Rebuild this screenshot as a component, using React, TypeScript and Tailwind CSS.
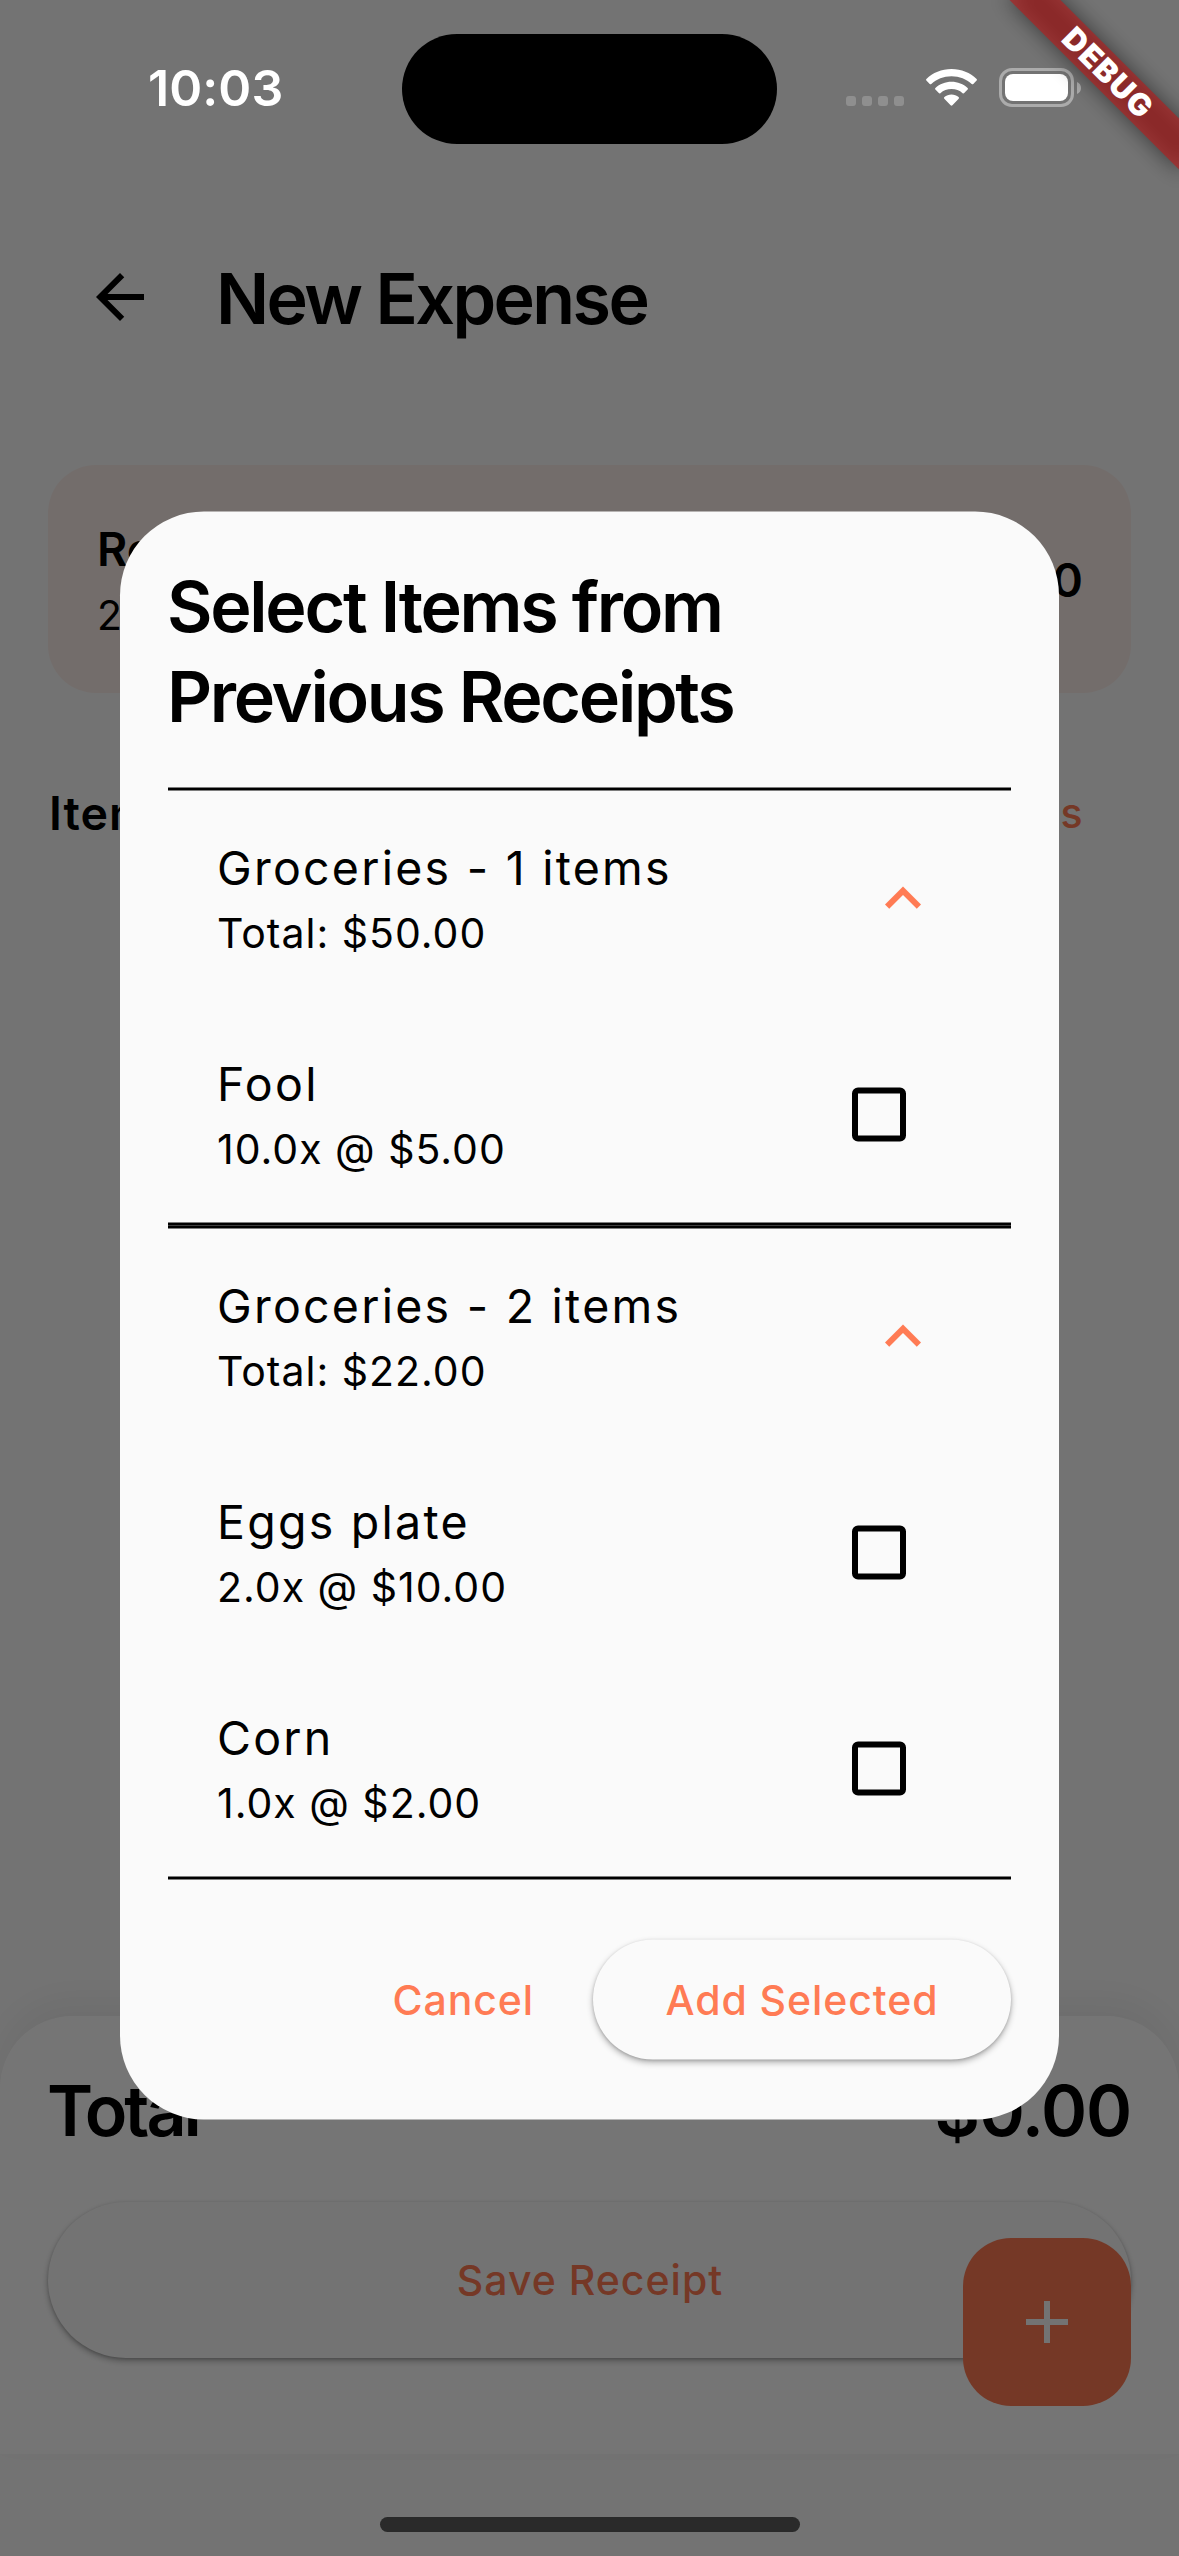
import React from "react";

type Line = { name: string; detail: string };
type Group = { title: string; total: string; items: Line[] };

const groups: Group[] = [
  {
    title: "Groceries - 1 items",
    total: "Total: $50.00",
    items: [{ name: "Fool", detail: "10.0x @ $5.00" }],
  },
  {
    title: "Groceries - 2 items",
    total: "Total: $22.00",
    items: [
      { name: "Eggs plate", detail: "2.0x @ $10.00" },
      { name: "Corn", detail: "1.0x @ $2.00" },
    ],
  },
];

function StatusBar() {
  return (
    <div className="absolute inset-x-0 top-0 flex h-[177px] items-start">
      <div className="mt-[58px] ml-[148px] w-[254px] text-[50px] leading-[60px] font-semibold tracking-[0.1px] text-white">
        10:03
      </div>
      <div className="mt-[34px] h-[110px] w-[375px] rounded-full bg-black" />
      <div className="mt-[96px] ml-[69px] flex gap-[6px]">
        {[0, 1, 2, 3].map((i) => (
          <span key={i} className="size-[10px] rounded-[3px] bg-[#8f8f8f]" />
        ))}
      </div>
      <svg className="mt-[69px] ml-[22px] h-[37px] w-[51px]" viewBox="0 0 51 37" fill="#fff">
        <path d="M25.5 0C35.4 0 44.3 3.8 50.6 9.9c.5.5.5 1.2 0 1.7l-3.3 3.4c-.4.4-1.2.5-1.6 0C40.5 10.2 33.4 7.3 25.5 7.3S10.5 10.2 5.3 15c-.4.5-1.2.4-1.6 0L.4 11.6c-.5-.5-.5-1.2 0-1.7C6.7 3.8 15.6 0 25.5 0z" />
        <path d="M25.5 12.8c6.2 0 11.9 2.3 16.1 6.1.5.5.5 1.2 0 1.7l-3.4 3.5c-.4.5-1.1.5-1.6.1-3-2.6-6.8-4.1-11.1-4.1s-8.1 1.5-11.1 4.1c-.5.4-1.2.4-1.6-.1l-3.4-3.5c-.5-.5-.5-1.2 0-1.7 4.2-3.8 9.9-6.1 16.1-6.1z" />
        <path d="M25.5 25.5c2.7 0 5.2 1 7.1 2.6.5.5.5 1.2.1 1.7l-6.3 6.5c-.5.5-1.3.5-1.8 0l-6.3-6.5c-.4-.5-.4-1.2.1-1.7 1.9-1.6 4.4-2.6 7.1-2.6z" />
      </svg>
      <div className="mt-[68px] ml-[22px] h-[39px] w-[75px] rounded-[13px] border-[3px] border-[#ababab] p-[3px]">
        <div className="size-full rounded-[8px] bg-white" />
      </div>
      <svg className="mt-[82px] ml-[3px] h-[12px] w-[4px]" viewBox="0 0 4 12" fill="#ababab">
        <path d="M0 0c2.5 1 4 3.3 4 6s-1.500 5-4 6z" />
      </svg>
    </div>
  );
}

function DebugBanner() {
  return (
    <div className="absolute top-0 right-0 size-[260px] overflow-hidden">
      <div className="absolute top-[54px] left-[68px] h-9 w-60 rotate-45">
        <div className="absolute inset-0 bg-black/50 blur-[11px]" />
        <div className="absolute inset-0 flex items-center justify-center bg-[#b71c1c]/63 pl-[3px] text-[31px] leading-9 font-black tracking-[1.2px] text-white">
          DEBUG
        </div>
      </div>
    </div>
  );
}

function Page() {
  return (
    <div className="flex h-full flex-col bg-[#fafafa]">
      <header className="flex h-[465px] items-start pt-[253px] pl-[84px]">
        <svg className="mt-[8px] size-[72px]" viewBox="0 0 24 24">
          <path d="M20 11H7.83l5.59-5.59L12 4l-8 8 8 8 1.41-1.41L7.83 13H20v-2z" />
        </svg>
        <h1 className="ml-[60px] text-[70px] leading-[92px] font-semibold tracking-[-2.6px]">New Expense</h1>
      </header>
      <section className="mx-12 flex h-[228px] items-center justify-between rounded-[48px] bg-[#fbede9] px-12">
        <div className="pl-px">
          <div className="text-[46.5px] leading-[72px] font-semibold">Re</div>
          <div className="text-[41px] leading-[60px] tracking-[0.75px]">2</div>
        </div>
        <div className="pt-[2px] text-[46.5px] leading-[72px] font-semibold">$0.00</div>
      </section>
      <section className="mx-12 mt-[84px] flex items-center justify-between pr-12">
        <div className="pl-px text-[46.5px] leading-[72px] font-semibold tracking-[1px]">Items</div>
        <div className="text-[41px] leading-[66px] font-medium tracking-[0.5px] text-[#ff7b54]">Previous Items</div>
      </section>
      <footer className="mt-auto mb-[102px] h-[438px] rounded-t-[72px] bg-white px-12 pt-[50px] shadow-[0_-15px_30px_rgba(0,0,0,0.05)]">
        <div className="flex justify-between text-[70px] leading-[90px] font-semibold">
          <span className="-ml-px tracking-[-3px]">Total</span>
          <span className="tracking-[-1.2px]">$0.00</span>
        </div>
        <div className="mt-[46px] flex h-[156px] items-center justify-center rounded-full bg-[#fafafa] pt-[2px] pl-px text-[41px] font-medium tracking-[1px] text-[#ff7b54] shadow-[0_3px_6px_rgba(0,0,0,0.3),0_1px_3px_rgba(0,0,0,0.15)]">
          Save Receipt
        </div>
      </footer>
      <div className="absolute right-12 bottom-[150px] flex size-[168px] items-center justify-center rounded-[48px] bg-[#ff7b54]">
        <svg className="size-[72px]" viewBox="0 0 24 24" fill="#fafafa">
          <path d="M19 13h-6v6h-2v-6H5v-2h6V5h2v6h6v2z" />
        </svg>
      </div>
    </div>
  );
}

function Tile({ title, subtitle, children }: { title: string; subtitle: string; children: React.ReactNode }) {
  return (
    <div className="flex h-[216px] items-center justify-between px-12">
      <div className="-mt-[2px] pl-px">
        <div className="text-[46.5px] leading-[70px] tracking-[2.25px]">{title}</div>
        <div className="text-[41px] leading-[60px] tracking-[1px]">{subtitle}</div>
      </div>
      {children}
    </div>
  );
}

function SelectDialog() {
  return (
    <div className="flex h-[1608px] w-[939px] translate-y-[0.5px] flex-col rounded-[84px] bg-[#fafafa] px-12">
      <h2 className="mt-[50px] -ml-px h-[226px] text-[70px] leading-[90px] font-semibold tracking-[-2.3px]">
        Select Items from
        <br />
        Previous Receipts
      </h2>
      <div>
        {groups.map((g) => (
          <div key={g.title} className="border-y-[3px] border-black">
            <Tile title={g.title} subtitle={g.total}>
              <svg className="mr-6 size-[72px]" viewBox="0 0 24 24" fill="#ff7b54">
                <path d="M12 8l-6 6 1.41 1.41L12 10.83l4.59 4.58L18 14z" />
              </svg>
            </Tile>
            {g.items.map((it) => (
              <Tile key={it.name} title={it.name} subtitle={it.detail}>
                <span className="mr-[57px] size-[54px] rounded-[6px] border-[6px] border-black" />
              </Tile>
            ))}
          </div>
        ))}
      </div>
      <div className="mt-[60px] flex items-center justify-end text-[41px] font-medium text-[#ff7b54]">
        <span className="mr-[59px] pt-[2px] tracking-[0.9px]">Cancel</span>
        <span className="flex h-[120px] w-[418px] items-center justify-center rounded-full bg-[#fafafa] pt-[2px] tracking-[0.9px] shadow-[0_3px_6px_rgba(0,0,0,0.3),0_1px_3px_rgba(0,0,0,0.15)]">
          Add Selected
        </span>
      </div>
    </div>
  );
}

export default function App() {
  return (
    <div className="relative h-[2556px] w-[1179px] overflow-hidden font-['Inter',sans-serif] text-black">
      <Page />
      <div className="absolute inset-0 flex items-start justify-center bg-black/54 pt-[511px]">
        <SelectDialog />
      </div>
      <div className="absolute inset-x-0 bottom-6 mx-auto h-[15px] w-[420px] rounded-full bg-[#2a2a2a]" />
      <StatusBar />
      <DebugBanner />
    </div>
  );
}
